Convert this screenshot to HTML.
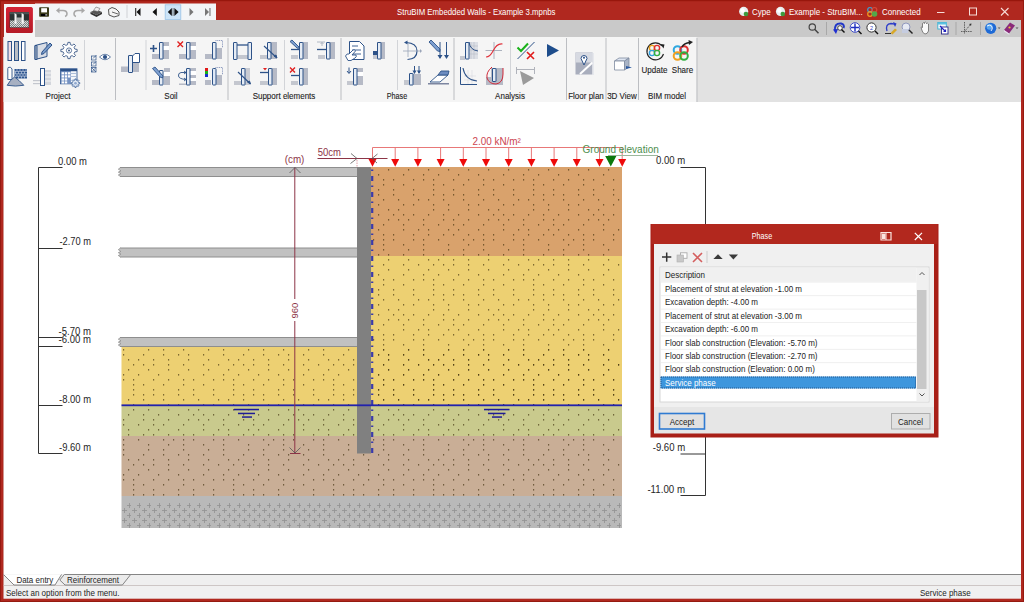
<!DOCTYPE html>
<html><head><meta charset="utf-8">
<style>
html,body{margin:0;padding:0;width:1024px;height:602px;overflow:hidden;background:#b0281f;}
text.u{font-size:9px;}
svg{position:absolute;left:0;top:0;font-family:"Liberation Sans",sans-serif;}
</style></head><body>
<svg width="1024" height="602" viewBox="0 0 1024 602">
<defs>
  <pattern id="dots" x="123" y="169" width="100" height="100" patternUnits="userSpaceOnUse"><g fill="#3a2a08" fill-opacity="0.62"><rect x="5" y="0" width="1.2" height="1.6"/><rect x="25" y="0" width="1.2" height="1.6"/><rect x="45" y="0" width="1.2" height="1.6"/><rect x="65" y="0" width="1.2" height="1.6"/><rect x="85" y="0" width="1.2" height="1.6"/><rect x="0" y="5" width="1.2" height="1.6"/><rect x="15" y="5" width="1.2" height="1.6"/><rect x="35" y="5" width="1.2" height="1.6"/><rect x="55" y="5" width="1.2" height="1.6"/><rect x="80" y="5" width="1.2" height="1.6"/><rect x="0" y="10" width="1.2" height="1.6"/><rect x="10" y="10" width="1.2" height="1.6"/><rect x="30" y="10" width="1.2" height="1.6"/><rect x="45" y="10" width="1.2" height="1.6"/><rect x="60" y="10" width="1.2" height="1.6"/><rect x="70" y="10" width="1.2" height="1.6"/><rect x="90" y="10" width="1.2" height="1.6"/><rect x="10" y="15" width="1.2" height="1.6"/><rect x="20" y="15" width="1.2" height="1.6"/><rect x="40" y="15" width="1.2" height="1.6"/><rect x="60" y="15" width="1.2" height="1.6"/><rect x="80" y="15" width="1.2" height="1.6"/><rect x="10" y="20" width="1.2" height="1.6"/><rect x="30" y="20" width="1.2" height="1.6"/><rect x="55" y="20" width="1.2" height="1.6"/><rect x="70" y="20" width="1.2" height="1.6"/><rect x="90" y="20" width="1.2" height="1.6"/><rect x="10" y="25" width="1.2" height="1.6"/><rect x="20" y="25" width="1.2" height="1.6"/><rect x="30" y="25" width="1.2" height="1.6"/><rect x="40" y="25" width="1.2" height="1.6"/><rect x="55" y="25" width="1.2" height="1.6"/><rect x="70" y="25" width="1.2" height="1.6"/><rect x="90" y="25" width="1.2" height="1.6"/><rect x="5" y="30" width="1.2" height="1.6"/><rect x="20" y="30" width="1.2" height="1.6"/><rect x="40" y="30" width="1.2" height="1.6"/><rect x="60" y="30" width="1.2" height="1.6"/><rect x="75" y="30" width="1.2" height="1.6"/><rect x="95" y="30" width="1.2" height="1.6"/><rect x="10" y="35" width="1.2" height="1.6"/><rect x="25" y="35" width="1.2" height="1.6"/><rect x="45" y="35" width="1.2" height="1.6"/><rect x="55" y="35" width="1.2" height="1.6"/><rect x="80" y="35" width="1.2" height="1.6"/><rect x="90" y="35" width="1.2" height="1.6"/><rect x="10" y="40" width="1.2" height="1.6"/><rect x="25" y="40" width="1.2" height="1.6"/><rect x="45" y="40" width="1.2" height="1.6"/><rect x="65" y="40" width="1.2" height="1.6"/><rect x="75" y="40" width="1.2" height="1.6"/><rect x="5" y="45" width="1.2" height="1.6"/><rect x="20" y="45" width="1.2" height="1.6"/><rect x="35" y="45" width="1.2" height="1.6"/><rect x="55" y="45" width="1.2" height="1.6"/><rect x="70" y="45" width="1.2" height="1.6"/><rect x="80" y="45" width="1.2" height="1.6"/><rect x="90" y="45" width="1.2" height="1.6"/><rect x="0" y="50" width="1.2" height="1.6"/><rect x="20" y="50" width="1.2" height="1.6"/><rect x="30" y="50" width="1.2" height="1.6"/><rect x="45" y="50" width="1.2" height="1.6"/><rect x="65" y="50" width="1.2" height="1.6"/><rect x="75" y="50" width="1.2" height="1.6"/><rect x="85" y="50" width="1.2" height="1.6"/><rect x="0" y="55" width="1.2" height="1.6"/><rect x="15" y="55" width="1.2" height="1.6"/><rect x="30" y="55" width="1.2" height="1.6"/><rect x="40" y="55" width="1.2" height="1.6"/><rect x="60" y="55" width="1.2" height="1.6"/><rect x="80" y="55" width="1.2" height="1.6"/><rect x="5" y="60" width="1.2" height="1.6"/><rect x="25" y="60" width="1.2" height="1.6"/><rect x="35" y="60" width="1.2" height="1.6"/><rect x="55" y="60" width="1.2" height="1.6"/><rect x="80" y="60" width="1.2" height="1.6"/><rect x="95" y="60" width="1.2" height="1.6"/><rect x="5" y="65" width="1.2" height="1.6"/><rect x="20" y="65" width="1.2" height="1.6"/><rect x="30" y="65" width="1.2" height="1.6"/><rect x="45" y="65" width="1.2" height="1.6"/><rect x="60" y="65" width="1.2" height="1.6"/><rect x="70" y="65" width="1.2" height="1.6"/><rect x="90" y="65" width="1.2" height="1.6"/><rect x="0" y="70" width="1.2" height="1.6"/><rect x="15" y="70" width="1.2" height="1.6"/><rect x="40" y="70" width="1.2" height="1.6"/><rect x="50" y="70" width="1.2" height="1.6"/><rect x="60" y="70" width="1.2" height="1.6"/><rect x="70" y="70" width="1.2" height="1.6"/><rect x="90" y="70" width="1.2" height="1.6"/><rect x="0" y="75" width="1.2" height="1.6"/><rect x="25" y="75" width="1.2" height="1.6"/><rect x="45" y="75" width="1.2" height="1.6"/><rect x="60" y="75" width="1.2" height="1.6"/><rect x="80" y="75" width="1.2" height="1.6"/><rect x="0" y="80" width="1.2" height="1.6"/><rect x="25" y="80" width="1.2" height="1.6"/><rect x="40" y="80" width="1.2" height="1.6"/><rect x="60" y="80" width="1.2" height="1.6"/><rect x="85" y="80" width="1.2" height="1.6"/><rect x="0" y="85" width="1.2" height="1.6"/><rect x="20" y="85" width="1.2" height="1.6"/><rect x="40" y="85" width="1.2" height="1.6"/><rect x="55" y="85" width="1.2" height="1.6"/><rect x="65" y="85" width="1.2" height="1.6"/><rect x="80" y="85" width="1.2" height="1.6"/><rect x="5" y="90" width="1.2" height="1.6"/><rect x="15" y="90" width="1.2" height="1.6"/><rect x="30" y="90" width="1.2" height="1.6"/><rect x="45" y="90" width="1.2" height="1.6"/><rect x="65" y="90" width="1.2" height="1.6"/><rect x="85" y="90" width="1.2" height="1.6"/><rect x="10" y="95" width="1.2" height="1.6"/><rect x="20" y="95" width="1.2" height="1.6"/><rect x="30" y="95" width="1.2" height="1.6"/><rect x="45" y="95" width="1.2" height="1.6"/><rect x="60" y="95" width="1.2" height="1.6"/><rect x="80" y="95" width="1.2" height="1.6"/><rect x="95" y="95" width="1.2" height="1.6"/></g></pattern>
  <pattern id="rock" x="121" y="498" width="10" height="10" patternUnits="userSpaceOnUse">
    <path d="M6 7.5h5M8.5 5v5M1 2.5h5M3.5 0v5" stroke="#949494" stroke-width="0.85" fill="none"/>
  </pattern>
</defs>

<!-- window frame -->
<rect x="0" y="0" width="1024" height="602" fill="#b0281f"/>
<rect x="0" y="0" width="1024" height="1.2" fill="#98160c"/>
<rect x="0" y="0" width="1" height="602" fill="#951a10"/>
<rect x="1023" y="0" width="1" height="602" fill="#951a10"/>
<rect x="0" y="601" width="1024" height="1" fill="#951a10"/>
<rect x="3" y="20" width="0.6" height="579" fill="#a03024"/>
<!-- title bar gray band -->
<rect x="35" y="20" width="986" height="17" fill="#c9c9c9"/>
<!-- app icon area -->
<rect x="4" y="4" width="31" height="33" fill="#f6f6f6"/>
<rect x="6.5" y="7" width="26" height="26" rx="2" fill="#c8202e"/>
<!-- QAT -->
<rect x="35" y="3.5" width="181" height="16.5" fill="#f3f5f7"/>
<!-- ribbon -->
<rect x="3.5" y="37" width="1017.5" height="65" fill="#e2e2e2"/>
<rect x="3.5" y="37" width="693" height="65" fill="#f5f5f5"/>
<!-- canvas -->
<rect x="3.5" y="102" width="1017.5" height="472" fill="#ffffff"/>
<!-- tabs strip -->
<rect x="3.5" y="574" width="1017.5" height="11.5" fill="#efefef"/>

<!-- status -->
<rect x="3.5" y="585.5" width="1017.5" height="13.2" fill="#f0f0f0"/>
<rect x="3.5" y="585" width="1017.5" height="0.8" fill="#c8c8c8"/>

<!-- ===== DRAWING ===== -->
<g id="drawing">
  <!-- soil layers right -->
  <rect x="371" y="167" width="251" height="89" fill="#d9a26c"/>
  <rect x="371" y="256" width="251" height="149.5" fill="#edd072"/>
  <!-- soil layers left -->
  <rect x="121.5" y="346" width="251" height="59.5" fill="#edd072"/>
  <rect x="121.5" y="405.5" width="500.5" height="30.5" fill="#c9ca8d"/>
  <rect x="121.5" y="436" width="500.5" height="60" fill="#c9ae96"/>
  <rect x="121.5" y="496" width="500.5" height="32" fill="#b9b9b9"/>
  <rect x="121.5" y="503" width="500.5" height="25" fill="url(#rock)"/>
  <rect x="371" y="167" width="251" height="238.5" fill="url(#dots)"/>
  <rect x="121.5" y="346" width="500.5" height="150" fill="url(#dots)"/>
  <!-- water table -->
  
  <g fill="#201c98">
    <rect x="234" y="408.8" width="25" height="1.5"/>
    <rect x="238" y="412.7" width="17" height="1.5"/>
    <rect x="242" y="416.3" width="10" height="1.5"/>
    <rect x="484" y="408.8" width="25.5" height="1.5"/>
    <rect x="488" y="412.7" width="17.5" height="1.5"/>
    <rect x="492" y="416.3" width="10" height="1.5"/>
  </g>
  <!-- slabs -->
  <g fill="#c1c1c1">
    <path d="M121 167.5H357V176.5H121L118.5 175L121 173.5L118.5 172L121 170.5L118.5 169Z"/>
    <path d="M121 248H357V257H121L118.5 255.5L121 254L118.5 252.5L121 251L118.5 249.5Z"/>
    <path d="M121 337.5H357V346.5H121L118.5 345L121 343.5L118.5 342L121 340.5L118.5 339Z"/>
  </g>
  <g stroke="#8e8e8e" stroke-width="1" fill="none">
    <path d="M120 167.5H357M120 176.5H357M120 248H357M120 257H357M120 337.5H357M120 346.5H357"/>
    <path d="M120.5 167.5L118.3 169.2L121 170.8L118.3 172.2L121 173.6L118.3 175L120.5 176.5M120.5 248L118.3 249.7L121 251.3L118.3 252.7L121 254.1L118.3 255.5L120.5 257M120.5 337.5L118.3 339.2L121 340.8L118.3 342.2L121 343.6L118.3 345L120.5 346.5" stroke-width="0.8"/>
  </g>
  <!-- wall -->
  <rect x="357" y="167" width="14" height="286.5" fill="#808080"/>
  <line x1="372.2" y1="168" x2="372.2" y2="454" stroke="#3a3aac" stroke-width="2.2" stroke-dasharray="5,4.5,1.5,5" stroke-dashoffset="8"/>

  <rect x="121.5" y="404.4" width="500.5" height="1.8" fill="#2222ac"/>
  <!-- load -->
  <g stroke="#e87878" stroke-width="1" fill="none">
    <path d="M372.5 147.5H622.5"/>
    <path d="M372.5 147.5V159M395.2 147.5V159M417.9 147.5V159M440.6 147.5V159M463.3 147.5V159M486 147.5V159M508.7 147.5V159M531.4 147.5V159M554.1 147.5V159M576.8 147.5V159M599.5 147.5V159M622.2 147.5V159"/>
  </g>
  <g fill="#ee0a0a">
    <path d="M368.5 159H376.5L372.5 166.8Z"/>
    <path d="M391.2 159H399.2L395.2 166.8Z"/>
    <path d="M413.9 159H421.9L417.9 166.8Z"/>
    <path d="M436.6 159H444.6L440.6 166.8Z"/>
    <path d="M459.3 159H467.3L463.3 166.8Z"/>
    <path d="M482 159H490L486 166.8Z"/>
    <path d="M504.7 159H512.7L508.7 166.8Z"/>
    <path d="M527.4 159H535.4L531.4 166.8Z"/>
    <path d="M550.1 159H558.1L554.1 166.8Z"/>
    <path d="M572.8 159H580.8L576.8 166.8Z"/>
    <path d="M595.5 159H603.5L599.5 166.8Z"/>
    <path d="M618.2 159H626.2L622.2 166.8Z"/>
  </g>
  <text x="472.4" y="144.9" font-size="10" fill="#cc4450" textLength="48.5" lengthAdjust="spacingAndGlyphs">2.00 kN/m²</text>
  <!-- ground elevation -->
  <text x="582.6" y="152.6" font-size="10" fill="#4e8e4e">Ground elevation</text>
  <rect x="608" y="155" width="50" height="1" fill="#9cb89c"/>
  <path d="M605.2 156H616.4L610.8 166.5Z" fill="#0b780b"/>

  <!-- dimensions -->
  <g stroke="#8c3446" stroke-width="1" fill="none">
    <path d="M317.5 158.5H387.5"/>
    <path d="M294.8 167.5V299M294.8 321V453"/>
    <path d="M290 453.5H300.5"/>
  </g>
  <g stroke="#555" stroke-width="0.8" fill="none">
    <path d="M351 153.5L357 158.5L350.5 163.5"/>
    <path d="M377.5 154L372 158.5L377 163"/>
    <path d="M289.5 173L295 167.5L300.5 173"/>
    <path d="M289.5 447.5L295 453L300.5 447.5"/>
  </g>
  <path d="M357 160V167" stroke="#e0a0a8" stroke-width="1" stroke-dasharray="1.5,1"/>
  <text x="317.8" y="155.6" font-size="10.5" fill="#8c3446" textLength="23.2" lengthAdjust="spacingAndGlyphs">50cm</text>
  <text x="284.8" y="163" font-size="10.5" fill="#8c3446" textLength="19.6" lengthAdjust="spacingAndGlyphs">(cm)</text>
  <text x="0" y="0" font-size="9.5" fill="#8c3446" transform="translate(298.3 318.5) rotate(-90)">960</text>

  <!-- elevation rulers -->
  <g stroke="#333" stroke-width="1" fill="none">
    <path d="M62.5 167.5H38.5V453.5H62.5M38.5 248.5H62.5M38.5 337.5H62.5M38.5 346.5H62.5M38.5 405.5H62.5"/>
    <path d="M680.5 167.5H705.5V495.5H680.5M680.5 454H705.5"/>
  </g>
  <g font-size="10.4" fill="#262626" lengthAdjust="spacingAndGlyphs">
    <text x="58.1" y="164.5" textLength="28.9" lengthAdjust="spacingAndGlyphs">0.00 m</text>
    <text x="59.5" y="245" textLength="31.5" lengthAdjust="spacingAndGlyphs">-2.70 m</text>
    <text x="58.6" y="334.6" textLength="32.4" lengthAdjust="spacingAndGlyphs">-5.70 m</text>
    <text x="58.6" y="343.4" textLength="32.4" lengthAdjust="spacingAndGlyphs">-6.00 m</text>
    <text x="59" y="402.8" textLength="32" lengthAdjust="spacingAndGlyphs">-8.00 m</text>
    <text x="59" y="450.8" textLength="32" lengthAdjust="spacingAndGlyphs">-9.60 m</text>
    <text x="656" y="164.3" textLength="29.2" lengthAdjust="spacingAndGlyphs">0.00 m</text>
    <text x="652.7" y="451.2" textLength="32.5" lengthAdjust="spacingAndGlyphs">-9.60 m</text>
    <text x="647.4" y="493" textLength="37.6" lengthAdjust="spacingAndGlyphs">-11.00 m</text>
  </g>
</g>

<!-- ===== DIALOG ===== -->
<g id="dialog">
  <rect x="650.5" y="224" width="288" height="213.5" fill="#a81f17"/>
  <rect x="651.5" y="224" width="286" height="20" fill="#b2281e"/>
  <rect x="654" y="244" width="280" height="189" fill="#f0f0f0"/>
  <text x="762" y="239" fill="#fff" text-anchor="middle" class="u" textLength="20.5" lengthAdjust="spacingAndGlyphs">Phase</text>
  <rect x="660" y="267" width="269" height="135" fill="#fff" stroke="#d6d6d6" stroke-width="1"/>
  <rect x="660.5" y="267.5" width="256" height="14" fill="#f0f0f0"/>
  <text x="665" y="278" fill="#222" class="u" textLength="40.0" lengthAdjust="spacingAndGlyphs">Description</text>
  <g font-size="8" fill="#222">
    <text x="665" y="292" class="u" textLength="137.0" lengthAdjust="spacingAndGlyphs">Placement of strut at elevation -1.00 m</text>
    <text x="665" y="305.4" class="u" textLength="93.0" lengthAdjust="spacingAndGlyphs">Excavation depth: -4.00 m</text>
    <text x="665" y="318.8" class="u" textLength="137.0" lengthAdjust="spacingAndGlyphs">Placement of strut at elevation -3.00 m</text>
    <text x="665" y="332.2" class="u" textLength="93.0" lengthAdjust="spacingAndGlyphs">Excavation depth: -6.00 m</text>
    <text x="665" y="345.6" class="u" textLength="152.5" lengthAdjust="spacingAndGlyphs">Floor slab construction (Elevation: -5.70 m)</text>
    <text x="665" y="359" class="u" textLength="152.5" lengthAdjust="spacingAndGlyphs">Floor slab construction (Elevation: -2.70 m)</text>
    <text x="665" y="372.4" class="u" textLength="149.8" lengthAdjust="spacingAndGlyphs">Floor slab construction (Elevation: 0.00 m)</text>
  </g>
  <rect x="660.5" y="376.5" width="255.5" height="12" fill="#3d96dd"/>
  <rect x="661" y="377" width="254.5" height="11" fill="none" stroke="#1a3d6a" stroke-width="0.7" stroke-dasharray="1,1"/>
  <text x="665" y="385.8" fill="#fff" class="u" textLength="50.7" lengthAdjust="spacingAndGlyphs">Service phase</text>
  <!-- scrollbar -->
  <rect x="916.5" y="268" width="12" height="133.5" fill="#f0f0f0"/>
  <rect x="917" y="290" width="9.5" height="99" fill="#c8c8c8"/>
  <!-- buttons -->
  <rect x="654" y="407" width="280" height="26.5" fill="#e6e6e6"/>
  <rect x="659.5" y="413.5" width="45" height="15.5" fill="#e1e1e1" stroke="#2f7bd2" stroke-width="1.6"/>
  <text x="682" y="424.5" fill="#222" text-anchor="middle" class="u" textLength="24.5" lengthAdjust="spacingAndGlyphs">Accept</text>
  <rect x="891.5" y="413.5" width="38.5" height="15.5" fill="#e1e1e1" stroke="#adadad" stroke-width="1"/>
  <text x="910.5" y="424.5" fill="#222" text-anchor="middle" class="u" textLength="24.9" lengthAdjust="spacingAndGlyphs">Cancel</text>
</g>

<!-- ===== RIBBON ICONS ===== -->
<g id="ribbon">
  <!-- separators -->
  <g fill="#d2d4d8">
    <rect x="84" y="40" width="1" height="50"/>
    <rect x="145.5" y="40" width="1" height="50"/>
    <rect x="284" y="40" width="1" height="50"/>
    <rect x="397" y="40" width="1" height="50"/>
    <rect x="510" y="40" width="1" height="50"/>
  </g>
  <g fill="#bcbec2">
    <rect x="115" y="38" width="1" height="62"/>
    <rect x="227.5" y="38" width="1" height="62"/>
    <rect x="340.5" y="38" width="1" height="62"/>
    <rect x="453.5" y="38" width="1" height="62"/>
    <rect x="566" y="38" width="1" height="62"/>
    <rect x="605.5" y="38" width="1" height="62"/>
    <rect x="638" y="38" width="1" height="62"/>
    <rect x="696.5" y="38" width="1" height="64"/>
  </g>

  <!-- PROJECT -->
  <g stroke="#2d5288" stroke-width="1" fill="none">
    <!-- J1 three bars -->
    <rect x="8" y="41.5" width="3.5" height="19" fill="#f2dfe6"/>
    <rect x="14.5" y="41.5" width="4" height="19" fill="#b9bcc4"/>
    <rect x="21.5" y="41.5" width="3.5" height="19" fill="#fff"/>
    <!-- J2 box with pencil -->
    <path d="M35 45.5L47 42.5V56.5L35 59.5Z" fill="#d9dde5"/>
    <path d="M35 45.5H37V59.5H35Z" fill="#b4bccb"/>
    <path d="M42 52L50 43L52 45L44 53.5L41.5 54.5Z" fill="#7a9bc9"/>
    <!-- J3 gear -->
    <path d="M77.13 49.41 L77.13 51.59 L74.83 51.90 L74.12 53.63 L75.52 55.47 L73.97 57.02 L72.13 55.62 L70.40 56.33 L70.09 58.63 L67.91 58.63 L67.60 56.33 L65.87 55.62 L64.03 57.02 L62.48 55.47 L63.88 53.63 L63.17 51.90 L60.87 51.59 L60.87 49.41 L63.17 49.10 L63.88 47.37 L62.48 45.53 L64.03 43.98 L65.87 45.38 L67.60 44.67 L67.91 42.37 L70.09 42.37 L70.40 44.67 L72.13 45.38 L73.97 43.98 L75.52 45.53 L74.12 47.37 L74.83 49.10Z" fill="#fff" stroke="#3d5a88" stroke-width="0.9"/>
    <circle cx="69" cy="50.5" r="2.6" fill="none" stroke="#3d5a88" stroke-width="0.8"/>
    <circle cx="69" cy="50.5" r="1" fill="#3d5a88" stroke="none"/>
    <!-- J4 wall + bricks + pile -->
    <path d="M7.8 79.5V68.5Q7.8 67.3 9 67.3H10.5L12 69V79.5Z" fill="#fff" stroke-width="0.9"/>
    <rect x="14.5" y="69" width="12.5" height="9.5" fill="#2f5690" stroke="none"/>
    <g stroke="#dfe7f3" stroke-width="0.55">
      <path d="M14.5 71.4H27M14.5 73.8H27M14.5 76.2H27"/>
      <path d="M17 69V71.4M20 69V71.4M23 69V71.4M26 69V71.4M15.5 71.4V73.8M18.5 71.4V73.8M21.5 71.4V73.8M24.5 71.4V73.8M17 73.8V76.2M20 73.8V76.2M23 73.8V76.2M26 73.8V76.2M15.5 76.2V78.5M18.5 76.2V78.5M21.5 76.2V78.5M24.5 76.2V78.5"/>
    </g>
    <path d="M7.2 85.3Q10 80 14.5 77Q19 80 23.8 85.3Q15.5 86.8 7.2 85.3Z" fill="#a7b0c2" stroke-width="0.9"/>
  </g>
  <g>
    <!-- J5 wall with faint lines -->
    <rect x="40.5" y="68.5" width="4" height="17" fill="#fff" stroke="#2d5288"/>
    <rect x="45" y="70" width="6" height="15" fill="#d3d6dc"/>
    <path d="M45 73H51M45 77H51M45 81H51" stroke="#f4f4f4" stroke-width="1"/>
    <rect x="33" y="80" width="7" height="1.2" fill="#c4c7ce"/>
    <rect x="33" y="83" width="7" height="1.2" fill="#c4c7ce"/>
    <!-- J6 table with gear -->
    <rect x="60.5" y="68.8" width="16.5" height="15" fill="#f4f7fb" stroke="#3a5f98" stroke-width="0.9"/>
    <rect x="61" y="71" width="9.9" height="12.5" fill="#7592c2"/>
    <rect x="60.5" y="68.8" width="16.5" height="2.4" fill="#2d5288"/>
    <g fill="#fff">
      <rect x="61.6" y="72.2" width="2.4" height="2.2"/><rect x="64.8" y="72.2" width="2.4" height="2.2"/><rect x="68" y="72.2" width="2.4" height="2.2"/>
      <rect x="61.6" y="75.3" width="2.4" height="2.2"/><rect x="64.8" y="75.3" width="2.4" height="2.2"/><rect x="68" y="75.3" width="2.4" height="2.2"/>
      <rect x="61.6" y="78.4" width="2.4" height="2.2"/><rect x="64.8" y="78.4" width="2.4" height="2.2"/>
      <rect x="61.6" y="81.4" width="2.4" height="2"/><rect x="64.8" y="81.4" width="2.4" height="2"/>
    </g>
    <path d="M71 73.5H76.2M71 76.5H76.2" stroke="#8ea6cc" stroke-width="0.7"/>
    <path d="M79.76 82.63 L79.76 83.77 L78.51 83.92 L78.14 84.82 L78.92 85.81 L78.11 86.62 L77.12 85.84 L76.22 86.21 L76.07 87.46 L74.93 87.46 L74.78 86.21 L73.88 85.84 L72.89 86.62 L72.08 85.81 L72.86 84.82 L72.49 83.92 L71.24 83.77 L71.24 82.63 L72.49 82.48 L72.86 81.58 L72.08 80.59 L72.89 79.78 L73.88 80.56 L74.78 80.19 L74.93 78.94 L76.07 78.94 L76.22 80.19 L77.12 80.56 L78.11 79.78 L78.92 80.59 L78.14 81.58 L78.51 82.48Z" fill="#dfe8f4" stroke="#3a5f98" stroke-width="0.8"/>
    <circle cx="75.5" cy="83.2" r="1.3" fill="#8ea6cc"/>
  </g>
  <!-- small checks + eye -->
  <g stroke="#2d5288" stroke-width="0.7" fill="none">
    <rect x="91.5" y="56" width="4.5" height="4"/>
    <rect x="91.5" y="62" width="4.5" height="4"/>
    <rect x="91.5" y="67.5" width="4.5" height="4.5"/>
    <path d="M93 58.5L96.5 55M93 64.5L96.5 61M91.5 67.5L96 72M96 67.5L91.5 72"/>
    <path d="M99.5 57Q105 51.5 110.5 57Q105 62.5 99.5 57Z" fill="#fff"/>
    <circle cx="105" cy="57" r="2.1" fill="#2d5288" stroke="none"/>
  </g>
  <!-- SOIL -->
  <g id="soil">
    <!-- S0 big -->
    <rect x="121" y="66.5" width="7" height="5.5" fill="#b6bac6"/>
    <rect x="132" y="62.5" width="7" height="9.5" fill="#b6bac6"/>
    <path d="M132.5 56L135 53.5H139.5V62.5H132.5Z" fill="#fff" stroke="#2d5288"/>
    <rect x="128.5" y="55.5" width="4" height="17" rx="0.3" fill="#e6ecf4" stroke="#2d5288"/>
    <!-- S1 +wall -->
    <rect x="152" y="54" width="7" height="5" fill="#b6bac6"/>
    <rect x="163" y="42" width="6" height="17" fill="#b6bac6"/>
    <rect x="163" y="46" width="6" height="4" fill="#fff"/>
    <rect x="159.5" y="42.5" width="3.5" height="16.5" rx="0.3" fill="#e6ecf4" stroke="#2d5288"/>
    <path d="M150 48.5H157M153.5 45V52" stroke="#2d5288" stroke-width="1.6"/>
    <!-- S2 x wall -->
    <rect x="179" y="54" width="7" height="5" fill="#b6bac6"/>
    <rect x="190" y="42" width="6" height="17" fill="#b6bac6"/>
    <rect x="190" y="46" width="6" height="4" fill="#fff"/>
    <rect x="186.5" y="42.5" width="3.5" height="16.5" rx="0.3" fill="#e6ecf4" stroke="#2d5288"/>
    <path d="M177.5 41.5L183 47M183 41.5L177.5 47" stroke="#e02020" stroke-width="1.4"/>
    <!-- S3 wall dotted -->
    <rect x="205" y="54" width="7" height="5" fill="#b6bac6"/>
    <rect x="216" y="48" width="6" height="11" fill="#b6bac6"/>
    <path d="M215.5 40.5H222.5V48" stroke="#6a7cac" stroke-width="0.8" stroke-dasharray="1,0.8" fill="none"/>
    <rect x="212.5" y="42.5" width="3.5" height="16.5" rx="0.3" fill="#e6ecf4" stroke="#2d5288"/>
    <!-- S4 pencil wall -->
    <rect x="152" y="80" width="7" height="5" fill="#b6bac6"/>
    <rect x="164" y="68" width="6" height="17" fill="#b6bac6"/>
    <rect x="164" y="72" width="6" height="4" fill="#fff"/>
    <rect x="159.5" y="70.5" width="3.5" height="14.5" rx="0.3" fill="#e6ecf4" stroke="#2d5288"/>
    <path d="M152.5 68.5L155 67L163 76L162.5 78L160 77Z" fill="#7d9fd0" stroke="#2d5288" stroke-width="0.9"/>
    <!-- S5 arrows wall -->
    <rect x="190" y="68" width="6" height="17" fill="#b6bac6"/>
    <rect x="190" y="71" width="6" height="4" fill="#fff"/>
    <rect x="190" y="78" width="6" height="3" fill="#fff"/>
    <rect x="186.5" y="68.5" width="3.5" height="16.5" rx="0.3" fill="#e6ecf4" stroke="#2d5288"/>
    <path d="M186 72.5H181Q178 73 178.5 76Q179 79 186 79.5M184 71L186 72.5L184 74M184 78L186 79.5L184 81" stroke="#2d5288" stroke-width="0.9" fill="none"/>
    <rect x="179" y="83.5" width="7" height="1.5" fill="#b6bac6"/>
    <!-- S6 color bar wall -->
    <rect x="205" y="80" width="6" height="5" fill="#b6bac6"/>
    <rect x="216" y="75" width="6" height="10" fill="#b6bac6"/>
    <path d="M215.5 67.5H222.5V75" stroke="#6a7cac" stroke-width="0.8" stroke-dasharray="1,0.8" fill="none"/>
    <rect x="205" y="68" width="3" height="3" fill="#e01818"/>
    <rect x="205" y="71" width="3" height="3" fill="#19b019"/>
    <rect x="205" y="74" width="3" height="3" fill="#1a2fd0"/>
    <rect x="212.5" y="68.5" width="3.5" height="16.5" rx="0.8" fill="#dfe8f5" stroke="#2d5288"/>
  </g>

  <!-- SUPPORT ELEMENTS -->
  <g>
    <!-- E1 double wall strut -->
    <rect x="236" y="55" width="12" height="4" fill="#c4c7cf"/>
    <rect x="233.5" y="42.5" width="3.5" height="17" rx="0.3" fill="#e6ecf4" stroke="#2d5288"/>
    <rect x="248" y="42.5" width="3.5" height="17" rx="0.3" fill="#e6ecf4" stroke="#2d5288"/>
    <path d="M237 45H248" stroke="#2d5288" stroke-width="1.3"/>
    <!-- E2 anchor diagonal -->
    <rect x="260" y="55" width="7" height="4" fill="#c4c7cf"/>
    <rect x="271" y="42" width="6" height="17" fill="#b6bac6"/>
    <rect x="267.5" y="42.5" width="3.5" height="16.5" rx="0.3" fill="#e6ecf4" stroke="#2d5288"/>
    <path d="M264 46L276.5 57.5" stroke="#2d5288" stroke-width="1.1"/>
    <path d="M274 56L277 58L276 55Z" fill="#2d5288" stroke="#2d5288"/>
    <!-- E3 pencil strut -->
    <rect x="291" y="55" width="7" height="4" fill="#c4c7cf"/>
    <rect x="303" y="42" width="5" height="17" fill="#b6bac6"/>
    <rect x="299.5" y="42.5" width="3.5" height="16.5" rx="0.3" fill="#e6ecf4" stroke="#2d5288"/>
    <path d="M291 49.5H299" stroke="#2d5288" stroke-width="1.3"/>
    <path d="M290 41.5L292 40L299 47L298.5 48.5L297 48Z" fill="#7d9fd0" stroke="#2d5288" stroke-width="0.9"/>
    <!-- E4 strut faint -->
    <rect x="318" y="55" width="7" height="4" fill="#c4c7cf"/>
    <rect x="330" y="42" width="5" height="17" fill="#b6bac6"/>
    <rect x="326.5" y="42.5" width="3.5" height="16.5" rx="0.3" fill="#e6ecf4" stroke="#2d5288"/>
    <path d="M317 49.5H326" stroke="#2d5288" stroke-width="1.3"/>
    <path d="M317 42H325M322 42.5V46M320.5 44L322 42.5L323.5 44" stroke="#a0a8b8" stroke-width="0.8" fill="none"/>
    <!-- E5 anchor 2 -->
    <rect x="234" y="81" width="7" height="4" fill="#c4c7cf"/>
    <rect x="245" y="68" width="5" height="17" fill="#c8cbd3"/>
    <rect x="241.5" y="68.5" width="3.5" height="16.5" rx="0.3" fill="#e6ecf4" stroke="#2d5288"/>
    <path d="M238 72L250 83.5" stroke="#2d5288" stroke-width="1.1"/>
    <path d="M247.5 82L250.5 84L249.5 81Z" fill="#2d5288" stroke="#2d5288"/>
    <!-- E6 strut with red triangle -->
    <rect x="260" y="81" width="8" height="4" fill="#c4c7cf"/>
    <rect x="272" y="68" width="5" height="17" fill="#b6bac6"/>
    <rect x="268.5" y="68.5" width="3.5" height="16.5" rx="0.3" fill="#e6ecf4" stroke="#2d5288"/>
    <path d="M260 72.5H268.5" stroke="#2d5288" stroke-width="1.3"/>
    <path d="M263 68H267L265 70.5Z" fill="#e02020"/>
    <!-- E7 x strut -->
    <rect x="291" y="81" width="7" height="4" fill="#c4c7cf"/>
    <rect x="303" y="68" width="5" height="17" fill="#b6bac6"/>
    <rect x="299.5" y="68.5" width="3.5" height="16.5" rx="0.3" fill="#e6ecf4" stroke="#2d5288"/>
    <path d="M291 75.5H299" stroke="#2d5288" stroke-width="1.3"/>
    <path d="M290 67.5L295 72.5M295 67.5L290 72.5" stroke="#e02020" stroke-width="1.4"/>
  </g>

  <!-- PHASE -->
  <g>
    <!-- P1 document with hand -->
    <path d="M349.5 41.5H359.5L364 46V59.5H349.5Z" fill="#fff" stroke="#2d5288"/>
    <path d="M352 46H358M352 50H361M352 54H361" stroke="#2d5288" stroke-width="0.9"/>
    <path d="M345.5 56Q347 53 349 54L353 50Q355 49 355.5 51L352 55H356Q357 57 355 58L351 60.5H348Z" fill="#fff" stroke="#2d5288" stroke-width="0.9"/>
    <!-- P2 wall with block -->
    <rect x="377" y="42" width="8" height="17" fill="#b6bac6"/>
    <rect x="373" y="55" width="4" height="4" fill="#c4c7cf"/>
    <rect x="373" y="51" width="5" height="4" fill="#2d5288"/>
    <rect x="377.5" y="42.5" width="3.5" height="16.5" rx="0.3" fill="#e6ecf4" stroke="#2d5288"/>
    <!-- P3 wall w arrows -->
    <rect x="347" y="81" width="6" height="4" fill="#c4c7cf"/>
    <rect x="357" y="68" width="6" height="17" fill="#b6bac6"/>
    <rect x="357" y="72" width="6" height="4" fill="#fff"/>
    <rect x="353.5" y="68.5" width="3.5" height="16.5" rx="0.3" fill="#e6ecf4" stroke="#2d5288"/>
    <path d="M349 67.5V73M347 71L349 73.5L351 71" stroke="#2d5288" stroke-width="1" fill="none"/>
    <!-- P4 arc -->
    <path d="M406 42.5Q417 43 417 51Q417 59 407.5 59.5" stroke="#2d5288" stroke-width="1.2" fill="none"/>
    <path d="M404 42.5L407.5 40.5V44.5Z" fill="#2d5288"/>
    <path d="M408 44V57M403 51H420" stroke="#9aa4b8" stroke-width="0.8"/>
    <path d="M420 49L422 51L420 53Z" fill="#9aa4b8"/>
    <!-- P5 pencil arrows -->
    <path d="M429 42L431 40L440 49L440 51.5L437.5 51Z" fill="#7d9fd0" stroke="#2d5288" stroke-width="0.9"/>
    <path d="M440 42V58M446.5 42V58" stroke="#2d5288" stroke-width="1"/>
    <path d="M437.5 55L440 59L442.5 55ZM444 55L446.5 59L449 55Z" fill="#2d5288"/>
    <!-- P6 wall arrows down -->
    <rect x="404" y="80" width="5" height="5" fill="#c4c7cf"/>
    <rect x="413" y="74" width="8" height="11" fill="#b6bac6"/>
    <rect x="409.5" y="73.5" width="3.5" height="11.5" rx="0.3" fill="#e6ecf4" stroke="#2d5288"/>
    <path d="M414.5 66V73M419 66V73" stroke="#2d5288" stroke-width="1"/>
    <path d="M412.5 70.5L414.5 74L416.5 70.5ZM417 70.5L419 74L421 70.5Z" fill="#2d5288"/>
    <!-- P7 eraser -->
    <path d="M430 82L438 75H448L440 82Z" fill="#fff" stroke="#2d5288" stroke-width="0.9"/>
    <path d="M438 75L441 71H449L448 75Z" fill="#6c8cc0" stroke="#2d5288" stroke-width="0.9"/>
    <rect x="428" y="83" width="21" height="1.5" fill="#7d86a0"/>
  </g>

  <!-- ANALYSIS -->
  <g>
    <!-- A1 -->
    <rect x="460" y="56" width="5" height="4" fill="#c4c7cf"/>
    <rect x="469" y="42" width="9" height="17" fill="#dcdfe5"/>
    <path d="M471 42V59M474 42V59M469 46H478M469 50H478M469 54H478" stroke="#b9bdc7" stroke-width="0.6"/>
    <rect x="465.5" y="42.5" width="3.5" height="16.5" rx="0.3" fill="#e6ecf4" stroke="#2d5288"/>
    <path d="M469 42Q470 50 478 51" stroke="#2d5288" stroke-width="1" fill="none"/>
    <!-- A2 -->
    <path d="M485.5 50.5H502M494 42V59" stroke="#a4aab8" stroke-width="0.9"/>
    <path d="M486 57Q490 57 493 51Q497 43 502.5 44" stroke="#e0303a" stroke-width="1.1" fill="none"/>
    <!-- A3 -->
    <path d="M460.5 67V84.5H477" stroke="#2d5288" stroke-width="1" fill="none"/>
    <path d="M464 76H476M464 80H476M468 70V84M472 70V84" stroke="#d6d9df" stroke-width="0.6"/>
    <path d="M463 68Q465 80 477 81" stroke="#2d5288" stroke-width="1.1" fill="none"/>
    <!-- A4 -->
    <rect x="486" y="77" width="17" height="8" fill="#b6bac6"/>
    <rect x="491" y="68" width="12" height="9" fill="#b6bac6"/>
    <rect x="492.5" y="68.5" width="3.5" height="13" rx="0.3" fill="#e6ecf4" stroke="#2d5288"/>
    <path d="M492 67Q486 72 487 78Q489 84 496 84Q503 83 503 74V68" stroke="#d02a3a" stroke-width="1" fill="none"/>
    <!-- A5 check x -->
    <path d="M517.5 59L534.5 42" stroke="#2d5288" stroke-width="1"/>
    <path d="M517.5 47.5L521 51L528 43.5" stroke="#19b219" stroke-width="2" fill="none"/>
    <path d="M527 52L534 59M534 52L527 59" stroke="#e01a1a" stroke-width="1.6"/>
    <!-- A6 play -->
    <path d="M547 44L559 50.5L547 57Z" fill="#1e4d8c"/>
    <!-- A7 gray play -->
    <path d="M516.5 67V74M534.5 67V74M517 69.5H534" stroke="#a8acb4" stroke-width="0.9"/>
    <path d="M520 71L523 85L534 78Z" fill="#9a9a9a"/>
  </g>

  <!-- FLOOR PLAN / 3D / BIM -->
  <g>
    <rect x="575.5" y="52.5" width="17" height="22" fill="#a9aebd"/>
    <rect x="575.5" y="52.5" width="17" height="10" fill="#d7dae2"/>
    <path d="M580 74L592.5 62.5" stroke="#fff" stroke-width="2"/>
    <rect x="592.5" y="53" width="1.5" height="22" fill="#e6e8ed"/>
    <path d="M584 65L581 58.5A3 3 0 1 1 587 58.5Z" fill="#fff" stroke="#2d5288" stroke-width="1"/>
    <circle cx="584" cy="57.8" r="1" fill="#2d5288"/>
    <!-- 3D view cube -->
    <path d="M614.5 61L619 58H629L624.5 61Z" fill="#dfe6f2" stroke="#7d8aa0" stroke-width="0.8"/>
    <path d="M614.5 61H624.5V70H614.5Z" fill="#fff" stroke="#7d8aa0" stroke-width="0.8"/>
    <path d="M624.5 61L629 58V67L624.5 70Z" fill="#a9b4c6" stroke="#7d8aa0" stroke-width="0.8"/>
    <path d="M626 66L632 67.5L626 69Z" fill="#2d5aa0"/>
    <!-- Update icon -->
    <path d="M662 46A8.5 8.5 0 1 0 663.5 54" stroke="#222" stroke-width="1.1" fill="none"/>
    <path d="M660.5 44L664.5 44.5L663.5 48.5Z" fill="#222"/>
    <circle cx="652" cy="48" r="2.6" fill="none" stroke="#e8a020" stroke-width="1.4"/>
    <circle cx="657" cy="48" r="2.6" fill="none" stroke="#e03030" stroke-width="1.4"/>
    <circle cx="652" cy="53" r="2.6" fill="none" stroke="#30a0e0" stroke-width="1.4"/>
    <circle cx="657" cy="53" r="2.6" fill="none" stroke="#30b040" stroke-width="1.4"/>
    <!-- Share icon -->
    <circle cx="677.5" cy="50" r="3.8" fill="none" stroke="#30a8e0" stroke-width="2"/>
    <circle cx="684" cy="50" r="3.8" fill="none" stroke="#e03030" stroke-width="2"/>
    <circle cx="677.5" cy="56" r="3.8" fill="none" stroke="#f0a020" stroke-width="2"/>
    <circle cx="684" cy="56" r="3.8" fill="none" stroke="#30b040" stroke-width="2"/>
    <path d="M682 47Q684 43 690 42.5" stroke="#222" stroke-width="1.6" fill="none"/>
    <path d="M688.5 40L693 42L689 45Z" fill="#222"/>
  </g>
</g>
<!-- ===== END RIBBON ===== -->

<!-- ===== CHROME ICONS ===== -->
<g id="chrome">
  <!-- app icon -->
  <defs>
    <linearGradient id="appg" x1="0" y1="0" x2="0" y2="1"><stop offset="0" stop-color="#d42336"/><stop offset="1" stop-color="#b51b26"/></linearGradient>
    <pattern id="chk" x="0" y="0" width="2" height="2" patternUnits="userSpaceOnUse"><rect width="2" height="2" fill="#7d8282"/><rect width="1" height="1" fill="#d8dcdc"/><rect x="1" y="1" width="1" height="1" fill="#d8dcdc"/></pattern>
  </defs>
  <rect x="6" y="7.2" width="26.8" height="25.8" rx="1.5" fill="url(#appg)"/>
  <rect x="9.6" y="12.2" width="19.4" height="15.5" fill="#2a3232"/>
  <rect x="9.6" y="12.2" width="19.4" height="2" fill="#4a5656"/>
  <rect x="10" y="20.5" width="18.6" height="6.8" fill="url(#chk)"/>
  <rect x="16.5" y="17.5" width="5.5" height="4" fill="#a8acac"/>
  <path d="M14.5 13L16.6 14.6V23.8H14.5Z" fill="#f4f4f4"/>
  <path d="M21.6 13L23.8 14.6V23.8H21.6Z" fill="#f4f4f4"/>
  <!-- QAT -->
  <rect x="39.2" y="7.2" width="9.8" height="9.6" rx="0.8" fill="#3a3a18"/>
  <rect x="41.2" y="8.2" width="5.8" height="4.2" fill="#ffffff"/>
  <rect x="41" y="14" width="6" height="2" fill="#000"/>
  <rect x="45.5" y="14.2" width="1.2" height="1.4" fill="#fff"/>
  <g stroke="#a8a8a8" stroke-width="1.6" fill="none">
    <path d="M58 10.5H63Q67 10.5 67 14Q67 16 65 16.5"/>
    <path d="M83 10.5H78Q74 10.5 74 14Q74 16 76 16.5"/>
  </g>
  <path d="M56 10.5L59.5 7.5V13.5Z" fill="#a8a8a8"/>
  <path d="M85 10.5L81.5 7.5V13.5Z" fill="#a8a8a8"/>
  <!-- printer -->
  <path d="M90.5 12L96 9.5L102 12L96.5 15Z" fill="#555" />
  <path d="M90.5 12V14L96.5 17L102 14V12L96.5 15Z" fill="#333"/>
  <path d="M93.5 10.5L96 7L100 8.5L98 11.5Z" fill="#f0f0f0" stroke="#666" stroke-width="0.6"/>
  <path d="M108.5 9.5L112 7.5L116 9L119 12V15.5L114 17L109 15Z" fill="#f4f4f4" stroke="#444" stroke-width="0.9"/>
  <path d="M112 12L118 14" stroke="#444" stroke-width="0.8"/>
  <rect x="126.5" y="5" width="1" height="13" fill="#cfd2d6"/>
  <!-- nav -->
  <rect x="135" y="8" width="1.3" height="8" fill="#444"/>
  <path d="M136.5 12L140.5 8V16Z" fill="#111"/>
  <path d="M152.5 12L156.8 8V16Z" fill="#111"/>
  <rect x="165.2" y="4.8" width="15.6" height="14.6" fill="#cce4f7" stroke="#99c3e6" stroke-width="0.8"/>
  <path d="M167.8 12L171.8 8V16Z" fill="#111"/>
  <rect x="172.6" y="8" width="0.9" height="8" fill="#666"/>
  <path d="M178.6 12L174.4 8V16Z" fill="#111"/>
  <path d="M189.5 8V16L193.5 12Z" fill="#777"/>
  <path d="M205 8V16L209 12Z" fill="#777"/>
  <rect x="209.3" y="8" width="1.3" height="8" fill="#888"/>

  <!-- title icons -->
  <circle cx="743.7" cy="11.4" r="4.6" fill="#e8eef0"/>
  <circle cx="742.5" cy="10.5" r="2.2" fill="#ffffff"/>
  <circle cx="746" cy="14" r="2.3" fill="#3d9a3d"/>
  <circle cx="780.5" cy="11.4" r="4.6" fill="#e8eef0"/>
  <circle cx="779.3" cy="10.5" r="2.2" fill="#ffffff"/>
  <circle cx="782.8" cy="14" r="2.3" fill="#3d9a3d"/>
  <circle cx="870" cy="9.8" r="2.3" fill="none" stroke="#3aa0d8" stroke-width="1.2"/>
  <circle cx="874.5" cy="9.8" r="2.3" fill="none" stroke="#d84a3a" stroke-width="1.2"/>
  <circle cx="870" cy="14" r="2.3" fill="none" stroke="#f09a20" stroke-width="1.2"/>
  <circle cx="874.5" cy="14" r="2.8" fill="#52a84a"/>
  <!-- window controls -->
  <rect x="937" y="12" width="7.5" height="1" fill="#f6dcd8"/>
  <rect x="969.5" y="8" width="7" height="7" fill="none" stroke="#f6dcd8" stroke-width="1"/>
  <path d="M1001 8L1008.5 15.5M1008.5 8L1001 15.5" stroke="#f6dcd8" stroke-width="1.1"/>

  <!-- gray band icons -->
  <circle cx="812.3" cy="27" r="3.2" fill="none" stroke="#444" stroke-width="1.2"/>
  <path d="M814.6 29.3L818.5 33.2" stroke="#444" stroke-width="1.5"/>
  <rect x="826" y="22" width="1" height="13" fill="#a8a8a8"/>
  <!-- A -->
  <path d="M835 31Q834 23 841 23.5Q845 24.5 843.5 28" stroke="#2238c8" stroke-width="2" fill="none"/>
  <path d="M833 29.5L836 34L838 29Z" fill="#2030d0"/>
  <circle cx="840" cy="28" r="2.3" fill="#fff" stroke="#222" stroke-width="0.8"/>
  <path d="M841.5 29.5L844.5 32.5" stroke="#111" stroke-width="1.4"/>
  <!-- B -->
  <circle cx="855" cy="27.5" r="4.8" fill="#fff" stroke="#2c3cc0" stroke-width="0.9"/>
  <path d="M855 23.5V31.5M851 27.5H859" stroke="#1e2ec0" stroke-width="1.4"/>
  <path d="M858.5 31L861.5 34" stroke="#111" stroke-width="1.4"/>
  <!-- C -->
  <circle cx="871.5" cy="27.5" r="4.6" fill="#fff" stroke="#333" stroke-width="1"/>
  <text x="871.5" y="29.5" font-size="5.5" fill="#2c3cc0" text-anchor="middle">2</text>
  <path d="M875 31L878 34" stroke="#111" stroke-width="1.4"/>
  <!-- D -->
  <path d="M887 31Q885 24 891 23.5Q894 23.5 895.5 25" stroke="#2c3cc8" stroke-width="1.3" fill="none"/>
  <path d="M893 22L896.5 23.5L895 27Z" fill="#2c3cc8"/>
  <path d="M890.5 33L895 28.5L897 30L892.5 34.5Z" fill="#d8a828"/>
  <rect x="885" y="33" width="6" height="1" fill="#333"/>
  <!-- E -->
  <circle cx="906" cy="27" r="4" fill="#e6e9f2" stroke="#8890b8" stroke-width="0.9"/>
  <rect x="902" y="29" width="6" height="4" fill="#c5cce0"/>
  <path d="M909 30L912.5 33.5" stroke="#222" stroke-width="1.4"/>
  <!-- hand -->
  <path d="M921.5 29Q920.5 26 922.5 27.5V23.5Q923.5 22 924.5 23.5V22.5Q925.5 21.5 926.5 23V23.5Q927.5 22.5 928.5 24V31Q927.5 34 925 34Q922.5 33.5 921.5 29Z" fill="#fafafa" stroke="#555" stroke-width="0.7"/>
  <!-- window w arrow -->
  <rect x="937.8" y="22.5" width="8.5" height="6.5" fill="#f4f8fc" stroke="#3ab0d0" stroke-width="0.9"/>
  <rect x="937.8" y="22.5" width="8.5" height="2" fill="#5ac0e0"/>
  <rect x="941.5" y="27" width="6.5" height="7" fill="#fff" stroke="#2a2a8a" stroke-width="0.9"/>
  <path d="M940 26L945.5 31.5M943.5 31.5H945.5V29.5" stroke="#2020c0" stroke-width="1.2" fill="none"/>
  <rect x="955.5" y="22" width="1" height="13" fill="#a8a8a8"/>
  <!-- axes icon -->
  <path d="M964.5 22V34M961 31.5H972M964.5 31.5L971 24" stroke="#555" stroke-width="0.9" stroke-dasharray="1.5,0.8" fill="none"/>
  <path d="M969 24L971.5 23.5L971 26Z" fill="#333"/>
  <rect x="980" y="22" width="1" height="13" fill="#a8a8a8"/>
  <!-- globe -->
  <circle cx="990.7" cy="28.3" r="5.6" fill="#1e6ad6"/>
  <circle cx="989.5" cy="26.8" r="3" fill="#5aa6f0"/>
  <path d="M987 26Q990 24 992 26.5Q993 29 991 31" stroke="#fff" stroke-width="0.9" fill="none"/>
  <path d="M997.8 27.5H1000.5L999.1 29Z" fill="#555"/>
  <!-- book -->
  <path d="M1004 30L1010 22.5L1015 25.5L1009 33.5Z" fill="#8a2a7a"/>
  <path d="M1004 30L1009 33.5L1009.5 35L1004 31.5Z" fill="#e8e0f0"/>
  <circle cx="1009.5" cy="27.5" r="1.1" fill="#f0c040"/>
  <path d="M1015.5 27.5H1018.5L1017 29Z" fill="#555"/>

  <!-- dialog title icons -->
  <path d="M881 232.5H891V240H881Z" fill="none" stroke="#fbe4e0" stroke-width="1.2"/>
  <path d="M886 232.5V240" stroke="#fbe4e0" stroke-width="1"/>
  <rect x="882" y="233.5" width="3.5" height="5.5" fill="#fbe4e0"/>
  <path d="M914.8 232.8L922 240M922 232.8L914.8 240" stroke="#fff" stroke-width="1.2"/>
  <!-- dialog toolbar -->
  <path d="M662 257H671.3M666.7 252.5V261.7" stroke="#333" stroke-width="1.5"/>
  <rect x="680.5" y="252.8" width="6.5" height="5.5" fill="#fff" stroke="#aaa" stroke-width="0.9"/>
  <rect x="677" y="255" width="6.5" height="7" fill="#c8c8c8" stroke="#b0b0b0" stroke-width="0.6"/>
  <path d="M693 253L702 262M702 253L693 262" stroke="#d45e5e" stroke-width="1.6"/>
  <rect x="706.5" y="251" width="1" height="12" fill="#cccccc"/>
  <path d="M713.4 259H722.7L718 254.2Z" fill="#3a3a3a"/>
  <path d="M728.8 254.5H738L733.4 259.5Z" fill="#3a3a3a"/>
  <!-- row separators -->
  <g fill="#ececec">
    <rect x="660.5" y="281.5" width="256" height="1"/>
    <rect x="660.5" y="295.3" width="256" height="0.8"/>
    <rect x="660.5" y="308.7" width="256" height="0.8"/>
    <rect x="660.5" y="322.1" width="256" height="0.8"/>
    <rect x="660.5" y="335.5" width="256" height="0.8"/>
    <rect x="660.5" y="348.9" width="256" height="0.8"/>
    <rect x="660.5" y="362.3" width="256" height="0.8"/>
  </g>
  <!-- scroll arrows -->
  <path d="M919.5 275L922 272.5L924.5 275" stroke="#555" stroke-width="1" fill="none"/>
  <path d="M919.5 393.5L922 396L924.5 393.5" stroke="#555" stroke-width="1" fill="none"/>

  <!-- tabs -->
  <path d="M3.5 574.5L14 585H55L61.5 574.5Z" fill="#ffffff"/>
  <path d="M3.5 574.5L14 585H55L61.5 574.5" fill="none" stroke="#858585" stroke-width="1"/>
  <path d="M64.3 574.5L59.8 580L65 585H122.4L130.7 574.5Z" fill="#ebebeb"/>
  <path d="M1021 574.5H64.3L59.8 580L65 585H122.4L130.7 574.5" fill="none" stroke="#858585" stroke-width="1"/>
</g>
<!-- ===== END CHROME ===== -->

<!-- ===== TEXT UI ===== -->
<g font-size="8" fill="#fff">
  <text x="397" y="15" class="u" textLength="158.5" lengthAdjust="spacingAndGlyphs">StruBIM Embedded Walls - Example 3.mpnbs</text>
  <text x="752" y="15" class="u" textLength="18.7" lengthAdjust="spacingAndGlyphs">Cype</text>
  <text x="789" y="15" class="u" textLength="73.8" lengthAdjust="spacingAndGlyphs">Example - StruBIM...</text>
  <text x="882" y="15" class="u" textLength="38.7" lengthAdjust="spacingAndGlyphs">Connected</text>
</g>
<g font-size="8" fill="#1e1e1e" stroke="#1e1e1e" stroke-width="0.12" text-anchor="middle">
  <text x="58" y="99" class="u" textLength="24.9" lengthAdjust="spacingAndGlyphs">Project</text>
  <text x="171" y="99" class="u" textLength="13.3" lengthAdjust="spacingAndGlyphs">Soil</text>
  <text x="284" y="99" class="u" textLength="62.7" lengthAdjust="spacingAndGlyphs">Support elements</text>
  <text x="397" y="99" class="u" textLength="20.5" lengthAdjust="spacingAndGlyphs">Phase</text>
  <text x="510" y="99" class="u" textLength="29.8" lengthAdjust="spacingAndGlyphs">Analysis</text>
  <text x="586" y="99" class="u" textLength="35.6" lengthAdjust="spacingAndGlyphs">Floor plan</text>
  <text x="622" y="99" class="u" textLength="29.7" lengthAdjust="spacingAndGlyphs">3D View</text>
  <text x="667" y="99" class="u" textLength="38.2" lengthAdjust="spacingAndGlyphs">BIM model</text>
  <text x="654.5" y="73" class="u" textLength="25.8" lengthAdjust="spacingAndGlyphs">Update</text>
  <text x="682.5" y="73" class="u" textLength="21.4" lengthAdjust="spacingAndGlyphs">Share</text>
</g>
<g font-size="8" fill="#1e1e1e">
  <text x="16.4" y="583" class="u" textLength="36.9" lengthAdjust="spacingAndGlyphs">Data entry</text>
  <text x="67" y="583" class="u" textLength="52.0" lengthAdjust="spacingAndGlyphs">Reinforcement</text>
  <text x="6" y="595.5" class="u" textLength="113.4" lengthAdjust="spacingAndGlyphs">Select an option from the menu.</text>
  <text x="920" y="595.5" class="u" textLength="50.7" lengthAdjust="spacingAndGlyphs">Service phase</text>
</g>
</svg>
</body></html>
